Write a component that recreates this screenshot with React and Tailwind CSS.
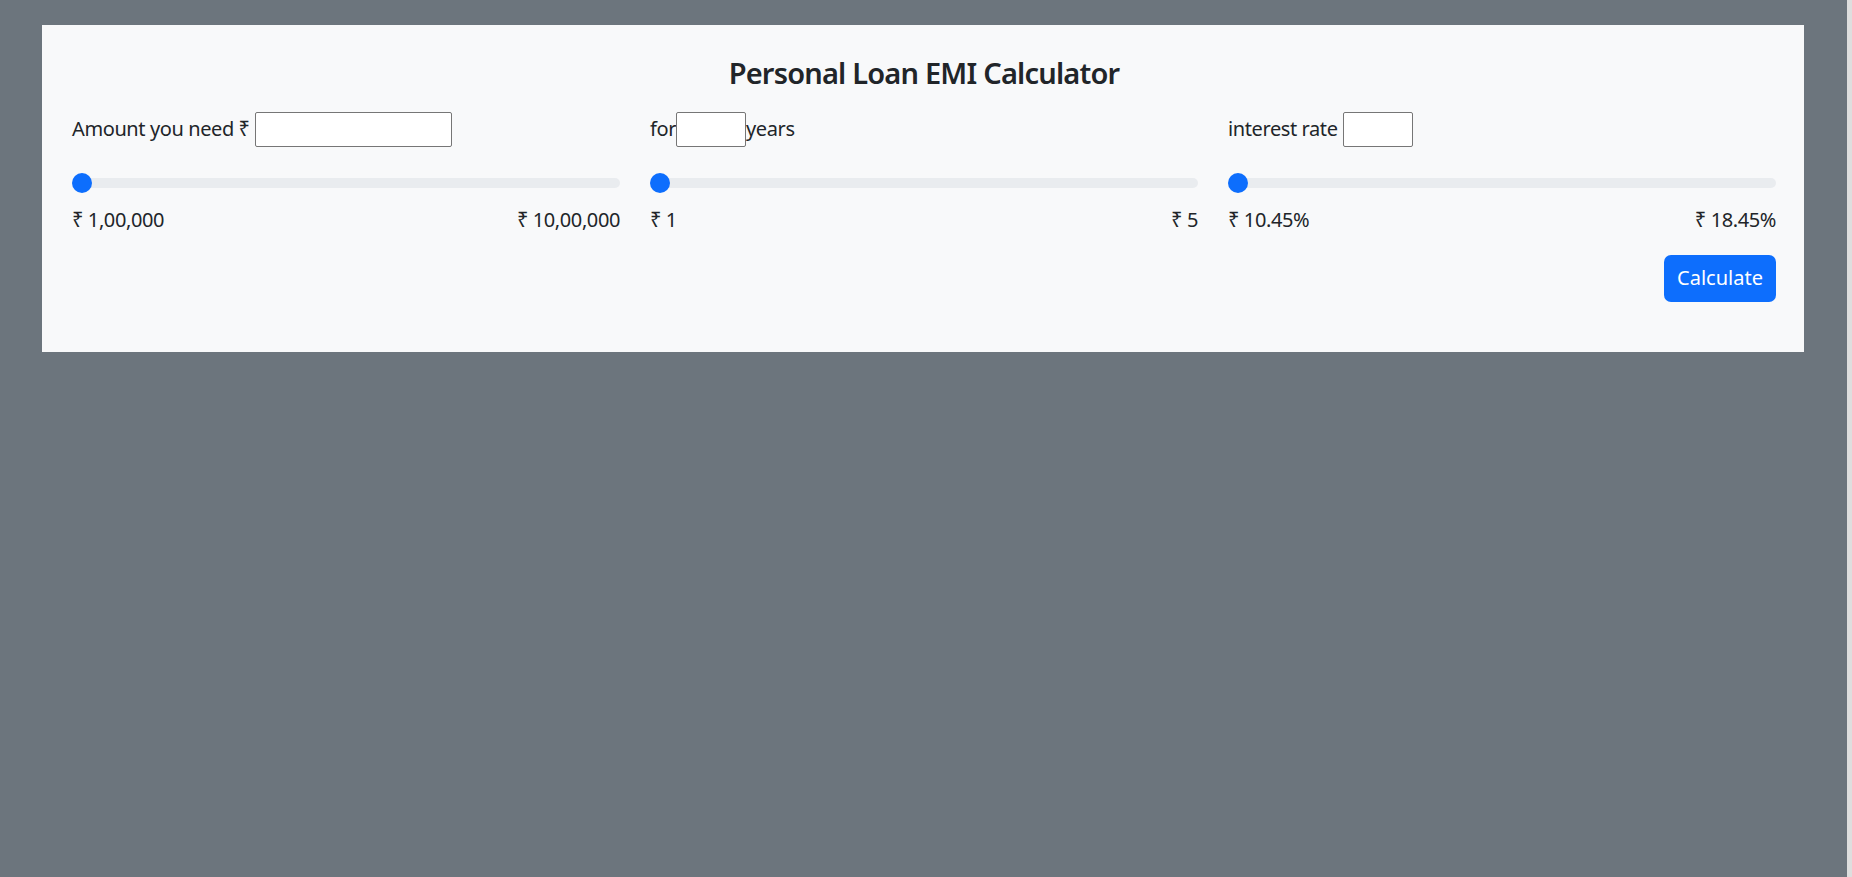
import { useState } from "react";

const ranges = [
  { min: "₹ 1,00,000", max: "₹ 10,00,000" },
  { min: "₹ 1", max: "₹ 5" },
  { min: "₹ 10.45%", max: "₹ 18.45%" },
];

function RangeBar() {
  return (
    <div className="relative flex h-[30px] items-center">
      <div className="h-[10px] w-full rounded-full bg-[#e9ecef]" />
      <div className="absolute left-0 top-[5px] h-[20px] w-[20px] rounded-full bg-[#0d6efd]" />
    </div>
  );
}

export default function App() {
  const [amount, setAmount] = useState("");
  const [years, setYears] = useState("");
  const [rate, setRate] = useState("");

  const inputClass =
    "h-[35px] rounded-[2px] border border-[#767676] bg-white px-1 text-[20px] outline-none";

  return (
    <div
      className="flex min-h-screen bg-[#6c757d] text-[20px] leading-[1.5] tracking-[-0.4px] text-[#212529]"
      style={{ fontFamily: '"Noto Sans", "DejaVu Sans", sans-serif' }}
    >
      <main className="flex-1 pl-[42px] pr-[43px] pt-[25px]">
        <section className="h-[327px] bg-[#f8f9fa] pl-[30px] pr-[28px] pt-[31px]">
          <h3 className="mb-[21px] text-center text-[29px] font-semibold leading-[1.2] tracking-[-0.8px]">
            Personal Loan EMI Calculator
          </h3>

          <div className="grid grid-cols-3 gap-[30px]">
            <div>
              <div className="flex h-[35px] items-center">
                <label className="mr-[5px] whitespace-nowrap">Amount you need ₹</label>
                <input
                  className={`${inputClass} w-[197px]`}
                  value={amount}
                  onChange={(e) => setAmount(e.target.value)}
                />
              </div>
              <div className="mt-[21px]">
                <RangeBar />
              </div>
              <div className="mt-[7px] flex justify-between">
                <span>{ranges[0].min}</span>
                <span>{ranges[0].max}</span>
              </div>
            </div>

            <div>
              <div className="flex h-[35px] items-center">
                <label>for</label>
                <input
                  className={`${inputClass} w-[70px]`}
                  value={years}
                  onChange={(e) => setYears(e.target.value)}
                />
                <span>years</span>
              </div>
              <div className="mt-[21px]">
                <RangeBar />
              </div>
              <div className="mt-[7px] flex justify-between">
                <span>{ranges[1].min}</span>
                <span>{ranges[1].max}</span>
              </div>
            </div>

            <div>
              <div className="flex h-[35px] items-center">
                <label className="mr-[5px]">interest rate</label>
                <input
                  className={`${inputClass} w-[70px]`}
                  value={rate}
                  onChange={(e) => setRate(e.target.value)}
                />
              </div>
              <div className="mt-[21px]">
                <RangeBar />
              </div>
              <div className="mt-[7px] flex justify-between">
                <span>{ranges[2].min}</span>
                <span>{ranges[2].max}</span>
              </div>
              <div className="mt-[20px] flex justify-end">
                <button className="h-[47px] w-[112px] rounded-[7px] bg-[#0d6efd] tracking-normal text-white">
                  Calculate
                </button>
              </div>
            </div>
          </div>
        </section>
      </main>
      <div className="w-[5px] bg-[#dedede]" />
    </div>
  );
}
